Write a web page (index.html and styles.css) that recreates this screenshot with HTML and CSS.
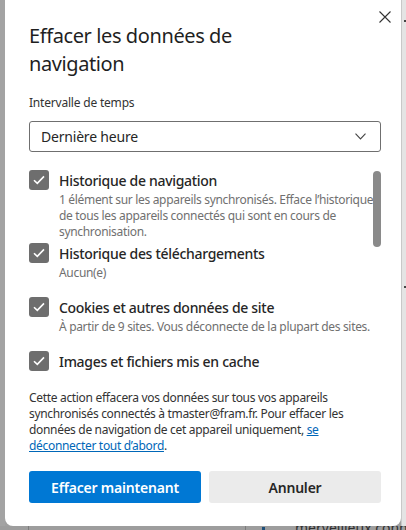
FILE: index.html
```html
<!DOCTYPE html>
<html lang="fr">
<head>
<meta charset="utf-8">
<link rel="stylesheet" href="styles.css">
</head>
<body>
<div class="page">
  <div class="page-main">
    <div class="page-left"></div>
    <div class="page-right"><span class="dash dash-a"></span><span class="dash dash-b"></span></div>
  </div>
  <div class="page-bottom">
    <span class="bg-line bg-line-a"></span>
    <span class="bg-line bg-line-b"></span>
    <span class="bg-mark"></span>
    <span class="bg-text">merveilleux connus</span>
  </div>
</div>
<div class="dialog">
  <button class="close" aria-label="Fermer">
    <svg width="12" height="12" viewBox="0 0 12 12"><path d="M0.5 0.5 L11.5 11.5 M11.5 0.5 L0.5 11.5" stroke="#333" stroke-width="1.1" fill="none"/></svg>
  </button>
  <h1 class="title">Effacer les données de navigation</h1>
  <div class="field-label">Intervalle de temps</div>
  <div class="select">
    <span>Dernière heure</span>
    <svg width="11" height="7" viewBox="0 0 11 7"><path d="M0.5 0.7 L5.5 5.9 L10.5 0.7" stroke="#444" stroke-width="1.1" fill="none"/></svg>
  </div>
  <div class="list-wrap">
    <div class="list">
      <div class="item item-first">
        <span class="check"><svg width="12" height="10" viewBox="0 0 12 10"><path d="M1 5.2 L4.3 8.4 L11 1.4" stroke="#fff" stroke-width="1.6" fill="none"/></svg></span>
        <div class="item-text">
          <div class="item-label">Historique de navigation</div>
          <div class="item-desc">1 élément sur les appareils synchronisés. Efface l’historique<br>de tous les appareils connectés qui sont en cours de<br>synchronisation.</div>
        </div>
      </div>
      <div class="item">
        <span class="check"><svg width="12" height="10" viewBox="0 0 12 10"><path d="M1 5.2 L4.3 8.4 L11 1.4" stroke="#fff" stroke-width="1.6" fill="none"/></svg></span>
        <div class="item-text">
          <div class="item-label">Historique des téléchargements</div>
          <div class="item-desc">Aucun(e)</div>
        </div>
      </div>
      <div class="item">
        <span class="check"><svg width="12" height="10" viewBox="0 0 12 10"><path d="M1 5.2 L4.3 8.4 L11 1.4" stroke="#fff" stroke-width="1.6" fill="none"/></svg></span>
        <div class="item-text">
          <div class="item-label">Cookies et autres données de site</div>
          <div class="item-desc">À partir de 9 sites. Vous déconnecte de la plupart des sites.</div>
        </div>
      </div>
      <div class="item">
        <span class="check"><svg width="12" height="10" viewBox="0 0 12 10"><path d="M1 5.2 L4.3 8.4 L11 1.4" stroke="#fff" stroke-width="1.6" fill="none"/></svg></span>
        <div class="item-text">
          <div class="item-label">Images et fichiers mis en cache</div>
        </div>
      </div>
    </div>
    <div class="scrollbar"></div>
  </div>
  <p class="note">Cette action effacera vos données sur tous vos appareils<br>synchronisés connectés à tmaster@fram.fr. Pour effacer les<br>données de navigation de cet appareil uniquement, <a href="#">se<br>déconnecter tout d’abord</a>.</p>
  <div class="buttons">
    <button class="btn btn-primary">Effacer maintenant</button>
    <button class="btn btn-secondary">Annuler</button>
  </div>
</div>
</body>
</html>
```
FILE: styles.css
```css
* { box-sizing: border-box; }
html, body {
  margin: 0;
  padding: 0;
  width: 406px;
  height: 530px;
  overflow: hidden;
}
body {
  background: #a0a0a0;
  font-family: "Noto Sans", "Open Sans", sans-serif;
  color: #262626;
  position: relative;
}
.page {
  width: 406px;
  height: 530px;
  display: flex;
  flex-direction: column;
}
.page-main {
  height: 526px;
  display: flex;
  justify-content: space-between;
}
.page-left {
  width: 5px;
  background: #a3a3a3;
}
.page-right {
  width: 5px;
  background: #e4e4e4;
  border-left: 1px solid #c8c8c8;
  position: relative;
}
.dash {
  position: absolute;
  left: 2px;
  width: 2px;
  height: 2px;
  background: #444;
}
.dash-a { top: 20px; }
.dash-b { top: 286px; }
.page-bottom {
  height: 4px;
  position: relative;
  overflow: hidden;
  background: #9d9d9d;
}
.bg-line {
  position: absolute;
  top: 0;
  bottom: 0;
  width: 1px;
  background: #7c7c7c;
}
.bg-line-a { left: 28px; }
.bg-line-b { left: 245px; }
.bg-mark {
  position: absolute;
  left: 262px;
  top: 1px;
  width: 3px;
  height: 6px;
  background: #1d4f7a;
}
.bg-text {
  position: absolute;
  left: 295px;
  top: -5px;
  font-size: 14px;
  line-height: 14px;
  color: #303030;
  white-space: nowrap;
}
.dialog {
  position: absolute;
  left: 5px;
  top: 0;
  width: 396px;
  height: 526px;
  background: #fff;
  border-radius: 0 0 8px 8px;
  padding: 22px 20px 0 24px;
}
.close {
  position: absolute;
  top: 11px;
  right: 10px;
  width: 12px;
  height: 12px;
  padding: 0;
  border: 0;
  background: transparent;
  display: flex;
}
.title {
  margin: 0;
  font-size: 20px;
  line-height: 28px;
  font-weight: 400;
  letter-spacing: -0.4px;
  color: #1f1f1f;
  width: 300px;
}
.field-label {
  margin-top: 17px;
  font-size: 12px;
  line-height: 16px;
  letter-spacing: -0.2px;
  color: #333;
}
.select {
  margin-top: 10px;
  height: 31px;
  width: 352px;
  border: 1px solid #6f6f6f;
  border-radius: 3px;
  display: flex;
  align-items: center;
  justify-content: space-between;
  padding: 0 14px 0 11px;
  font-size: 14px;
  letter-spacing: -0.2px;
  color: #262626;
}
.list-wrap {
  margin-top: 18px;
  height: 208px;
  position: relative;
  overflow: hidden;
}
.list {
  display: flex;
  flex-direction: column;
}
.item {
  display: flex;
  gap: 10px;
  margin-bottom: 16px;
}
.item-first { margin-bottom: 3px; }
.item-text { padding-top: 1px; }
.check {
  flex: none;
  width: 20px;
  height: 20px;
  border-radius: 3px;
  background: #6e6e6e;
  display: flex;
  align-items: center;
  justify-content: center;
}
.item-label {
  font-size: 14px;
  line-height: 20px;
  font-weight: 500;
  letter-spacing: -0.3px;
  color: #262626;
  white-space: nowrap;
}
.item-desc {
  margin-top: 1px;
  font-size: 12px;
  line-height: 16px;
  letter-spacing: -0.32px;
  color: #707070;
  white-space: nowrap;
}
.scrollbar {
  position: absolute;
  right: 0;
  top: 1px;
  width: 8px;
  height: 76px;
  border-radius: 4px;
  background: #8a8a8a;
}
.note {
  margin: 12px 0 0 0;
  font-size: 12px;
  line-height: 16px;
  letter-spacing: -0.32px;
  color: #333;
  white-space: nowrap;
}
.note a {
  color: #0067b8;
  text-decoration: underline;
}
.buttons {
  margin-top: 17px;
  display: flex;
  gap: 8px;
}
.btn {
  width: 172px;
  height: 32px;
  border: 0;
  border-radius: 3px;
  font-family: inherit;
  font-size: 14px;
  font-weight: 600;
  letter-spacing: -0.2px;
}
.btn-primary { background: #0078d4; color: #fff; }
.btn-secondary { background: #ebebeb; color: #262626; }
```
